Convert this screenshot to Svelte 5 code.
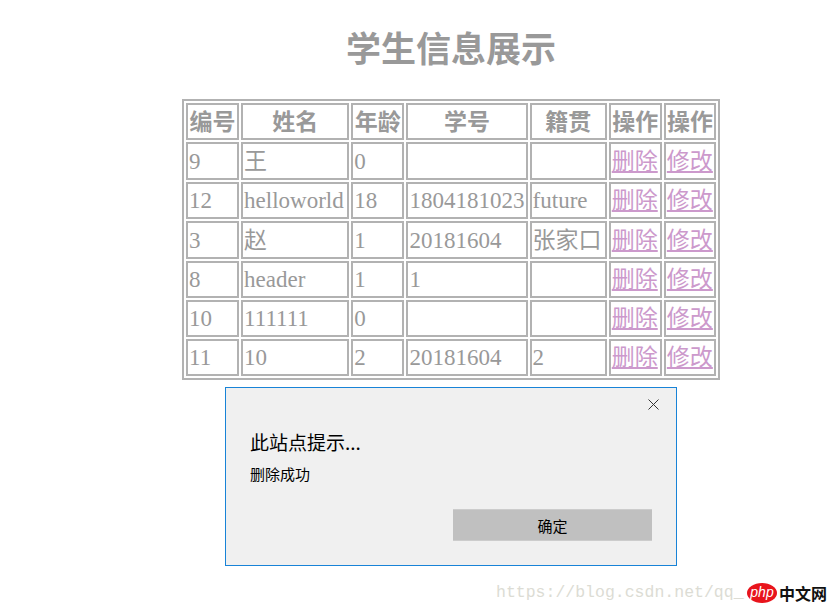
<script>
  const heads = [
    { text: "编号", width: 47 },
    { text: "姓名", width: 102 },
    { text: "年龄", width: 47 },
    { text: "学号", width: 115 },
    { text: "籍贯", width: 71 },
    { text: "操作", width: 47 },
    { text: "操作", width: 46 },
  ];
  const rows = [
    ["9", "王", "0", "", ""],
    ["12", "helloworld", "18", "1804181023", "future"],
    ["3", "赵", "1", "20181604", "张家口"],
    ["8", "header", "1", "1", ""],
    ["10", "111111", "0", "", ""],
    ["11", "10", "2", "20181604", "2"],
  ];
</script>

<main>
  <h1>学生信息展示</h1>
  <table>
    <thead>
      <tr>
        {#each heads as head}
          <th style="width: {head.width}px">{head.text}</th>
        {/each}
      </tr>
    </thead>
    <tbody>
      {#each rows as row}
        <tr>
          {#each row as cell}
            <td>{cell}</td>
          {/each}
          <td><a href="#del">删除</a></td>
          <td><a href="#edit">修改</a></td>
        </tr>
      {/each}
    </tbody>
  </table>
</main>

<div class="dialog">
  <button class="close" aria-label="关闭">
    <svg width="11" height="11" viewBox="0 0 11 11">
      <path d="M0.5 0.5L10.5 10.5M10.5 0.5L0.5 10.5" stroke="#333" fill="none" />
    </svg>
  </button>
  <h2>此站点提示...</h2>
  <p>删除成功</p>
  <div class="actions">
    <button class="ok">确定</button>
  </div>
</div>

<div class="watermark">https://blog.csdn.net/qq_</div>

<div class="logo">
  <span class="php">php</span>
  <span class="cn">中文网</span>
</div>

<style>
  :global(body) {
    background: #fff;
    overflow: hidden;
  }
  main {
    width: 538px;
    margin-left: 182px;
    font-family: "Liberation Serif", "Noto Sans CJK SC", serif;
    color: #999;
  }
  h1 {
    margin: 0;
    padding-top: 29px;
    height: 99px;
    box-sizing: border-box;
    text-align: center;
    font-family: "Liberation Sans", "Noto Sans CJK SC", sans-serif;
    font-size: 35px;
    line-height: 42px;
    font-weight: 700;
  }
  table {
    border: 2px solid #b2b2b2;
    border-spacing: 2px;
    border-collapse: separate;
    table-layout: fixed;
    width: 538px;
    box-sizing: border-box;
    font-size: 23px;
    line-height: 31px;
  }
  th,
  td {
    border: 2px solid #b2b2b2;
    padding: 1px;
    height: 31px;
    white-space: nowrap;
    overflow: hidden;
  }
  tbody tr:nth-child(1) td,
  tbody tr:nth-child(3) td {
    height: 32px;
  }
  th {
    padding: 2px 1px 0;
    font-family: "Liberation Sans", "Noto Sans CJK SC", sans-serif;
    font-weight: 700;
  }
  td {
    text-align: left;
  }
  a {
    color: #cc99cc;
  }
  .dialog {
    position: absolute;
    left: 225px;
    top: 387px;
    width: 452px;
    height: 179px;
    box-sizing: border-box;
    border: 1px solid #1883d7;
    background: #f0f0f0;
    padding: 41px 24px 0;
    display: flex;
    flex-direction: column;
    color: #000;
    font-family: "Noto Sans CJK SC", sans-serif;
  }
  .close {
    position: absolute;
    top: 11px;
    right: 17px;
    width: 11px;
    height: 11px;
    padding: 0;
    border: 0;
    background: none;
    display: flex;
  }
  h2 {
    margin: 0;
    font-size: 19px;
    line-height: 26px;
    font-weight: 400;
  }
  p {
    margin: 9px 0 0;
    font-size: 15px;
    line-height: 20px;
  }
  .actions {
    display: flex;
    justify-content: flex-end;
    margin-top: 25px;
  }
  .ok {
    width: 199px;
    height: 32px;
    border: 0;
    border-top: 1px solid #ccc;
    border-bottom: 1px solid #ccc;
    background: #c0c0c0;
    font: 15px "Noto Sans CJK SC", sans-serif;
    color: #000;
    padding: 0;
  }
  .watermark {
    position: absolute;
    left: 496px;
    top: 583px;
    font-family: "Liberation Mono", monospace;
    font-size: 16.5px;
    line-height: 20px;
    color: #dcdcd4;
  }
  .logo {
    position: absolute;
    left: 747px;
    top: 582px;
    display: flex;
    align-items: center;
    gap: 2px;
    height: 22px;
  }
  .php {
    width: 30px;
    height: 20px;
    border-radius: 50%;
    background: #e8141c;
    color: #fff;
    font: italic 14px/19px "Liberation Sans", sans-serif;
    text-align: center;
  }
  .cn {
    font: 700 16px/20px "Noto Sans CJK SC", sans-serif;
    color: #111;
  }
</style>
